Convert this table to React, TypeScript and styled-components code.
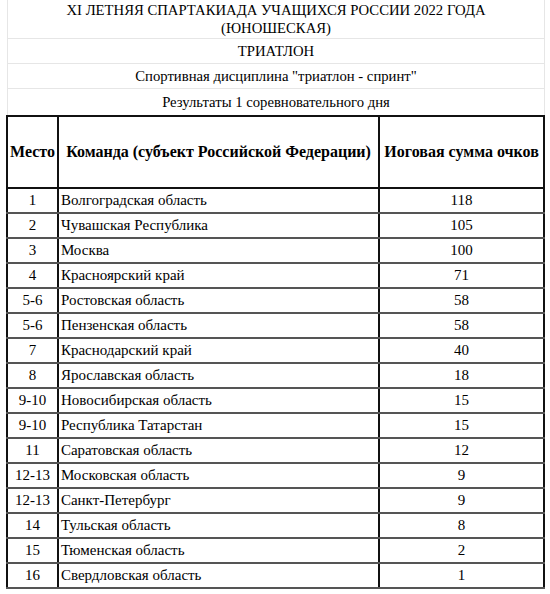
import React from 'react';
import styled, { createGlobalStyle } from 'styled-components';

interface Result {
  place: string;
  team: string;
  points: number;
}

const results: Result[] = [
  { place: '1', team: 'Волгоградская область', points: 118 },
  { place: '2', team: 'Чувашская Республика', points: 105 },
  { place: '3', team: 'Москва', points: 100 },
  { place: '4', team: 'Красноярский край', points: 71 },
  { place: '5-6', team: 'Ростовская область', points: 58 },
  { place: '5-6', team: 'Пензенская область', points: 58 },
  { place: '7', team: 'Краснодарский край', points: 40 },
  { place: '8', team: 'Ярославская область', points: 18 },
  { place: '9-10', team: 'Новосибирская область', points: 15 },
  { place: '9-10', team: 'Республика Татарстан', points: 15 },
  { place: '11', team: 'Саратовская область', points: 12 },
  { place: '12-13', team: 'Московская область', points: 9 },
  { place: '12-13', team: 'Санкт-Петербург', points: 9 },
  { place: '14', team: 'Тульская область', points: 8 },
  { place: '15', team: 'Тюменская область', points: 2 },
  { place: '16', team: 'Свердловская область', points: 1 },
];

const GlobalStyle = createGlobalStyle`
  body {
    margin: 0;
    background: #fff;
    color: #000;
    font-family: "Liberation Serif", "Times New Roman", serif;
  }
`;

const Page = styled.div`
  padding: 0 5px 0 6px;
`;

const Caption = styled.div`
  display: flex;
  flex-direction: column;
  margin-left: 1px;
  border-left: 1px solid #e6e6e6;
  border-right: 1px solid #e6e6e6;
`;

// light gray heading lines above the results table
const CaptionRow = styled.div<{ $height: number }>`
  height: ${(p) => p.$height}px;
  display: flex;
  align-items: center;
  justify-content: center;
  text-align: center;
  font-family: "Liberation Serif", "Times New Roman", serif;
  font-size: 14.7px;
  line-height: 18px;
  padding: 0 30px;
  box-sizing: border-box;
  border-bottom: 1px solid #e6e6e6;

  &:last-child {
    border-bottom: none;
  }
`;

const Table = styled.table`
  width: 100%;
  border-collapse: collapse;
  border: 2px solid #000;
  font-family: "Liberation Serif", "Times New Roman", serif;
  font-size: 15px;
`;

const HeadCell = styled.th`
  height: 70px;
  padding: 0 1px;
  font-size: 16px;
  font-weight: bold;
  white-space: nowrap;
  border: 2px solid #111;
`;

const Cell = styled.td<{ $align?: 'left' | 'center' }>`
  height: 21px;
  padding: 1px 2px;
  text-align: ${(p) => p.$align || 'center'};
  white-space: nowrap;
  border-left: 2px solid #111;
  border-right: 2px solid #111;
  border-top: 2px solid #555;
  border-bottom: 2px solid #555;
`;

const App: React.FC = () => {
  return (
    <Page>
      <GlobalStyle />
      <Caption>
        <CaptionRow $height={39}>
          XI ЛЕТНЯЯ СПАРТАКИАДА УЧАЩИХСЯ РОССИИ 2022 ГОДА (ЮНОШЕСКАЯ)
        </CaptionRow>
        <CaptionRow $height={25}>ТРИАТЛОН</CaptionRow>
        <CaptionRow $height={25}>Спортивная дисциплина "триатлон - спринт"</CaptionRow>
        <CaptionRow $height={26}>Результаты 1 соревновательного дня</CaptionRow>
      </Caption>
      <Table>
        <thead>
          <tr>
            <HeadCell>Место</HeadCell>
            <HeadCell>Команда (субъект Российской Федерации)</HeadCell>
            <HeadCell>Иоговая сумма очков</HeadCell>
          </tr>
        </thead>
        <tbody>
          {results.map((r, i) => (
            <tr key={i}>
              <Cell>{r.place}</Cell>
              <Cell $align="left">{r.team}</Cell>
              <Cell>{r.points}</Cell>
            </tr>
          ))}
        </tbody>
      </Table>
    </Page>
  );
};

export default App;
